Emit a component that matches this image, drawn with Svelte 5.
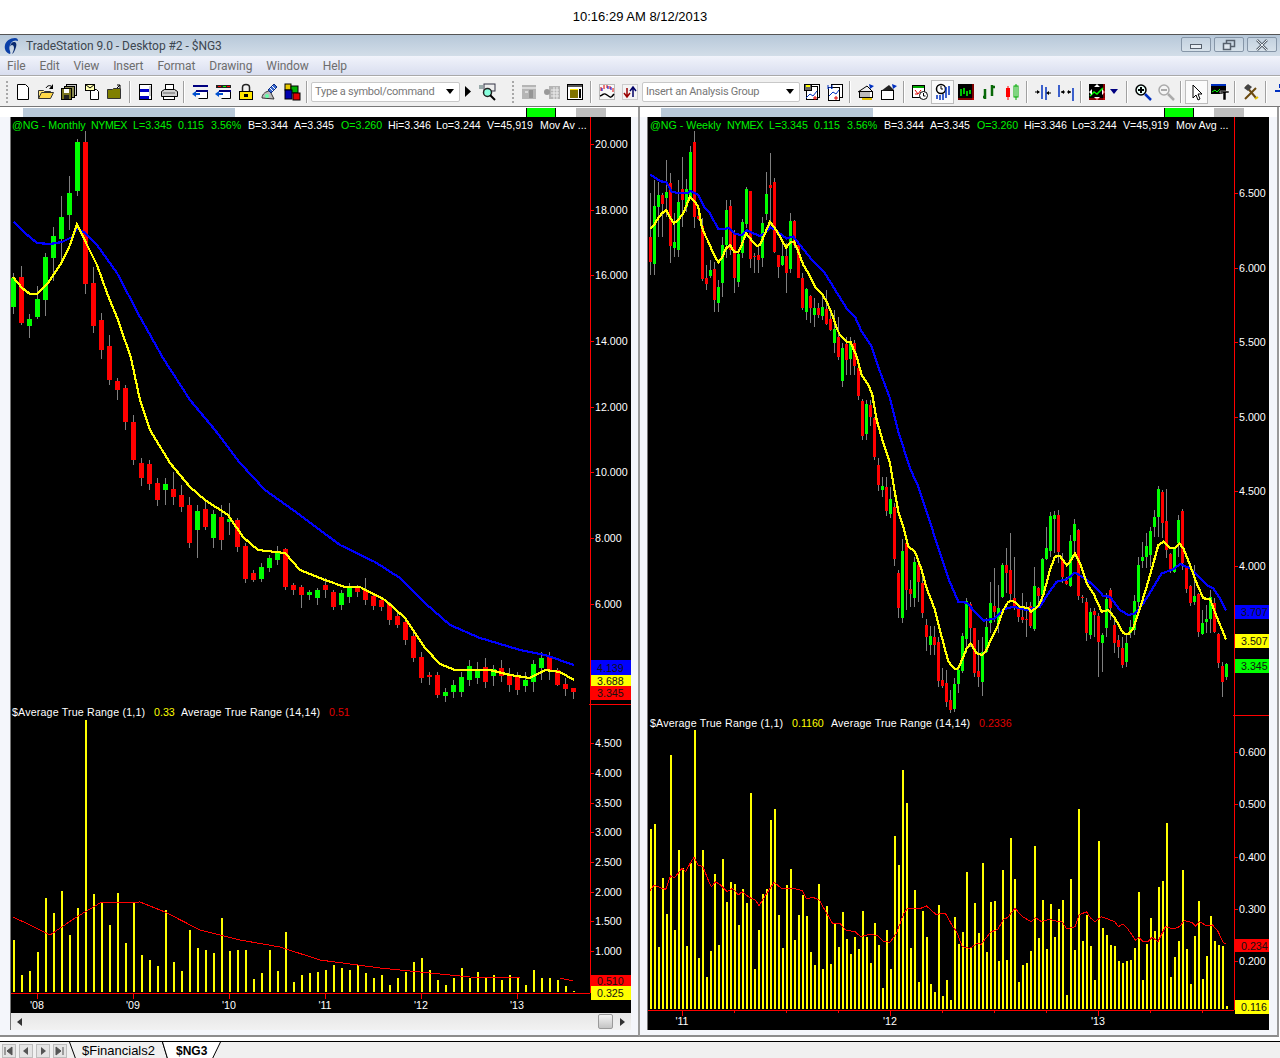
<script>
  // monthly candles, page y: [colour, wick top, body top, body bottom, wick bottom]
  const monthly = [
    ['g',273,278,307,314],['r',266,277,323,325],['g',314,319,326,338],['g',286,299,317,319],['g',253,257,300,316],
    ['g',227,236,258,281],['g',196,217,239,260],['g',176,193,215,230],['g',139,142,191,196],['r',131,142,284,294],
    ['r',267,283,326,333],['r',313,320,350,359],['r',335,346,380,385],['r',378,381,390,400],['r',385,388,422,430],
    ['r',415,422,460,465],['r',458,463,478,486],['r',460,464,484,490],['r',478,483,500,506],['g',478,484,490,505],
    ['r',472,489,497,505],['r',485,495,507,512],['r',497,505,543,548],['g',505,511,530,558],['r',500,509,527,530],
    ['g',510,514,538,548],['r',505,517,540,550],['g',503,519,522,535],['r',518,520,547,552],['r',543,546,579,583],
    ['r',570,573,580,582],['g',563,567,579,582],['g',555,558,568,572],['g',546,552,560,565],['r',548,549,587,590],
    ['r',583,585,590,595],['r',585,587,595,608],['g',590,592,595,600],['g',588,590,598,605],['r',578,585,590,598],
    ['r',590,592,607,610],['g',590,593,605,610],['g',583,586,597,603],['r',585,588,592,597],['r',578,590,600,605],
    ['r',595,596,606,610],['r',597,600,607,611],['r',602,604,620,625],['r',610,616,625,628],['r',618,622,640,645],
    ['r',630,636,658,662],['r',652,657,678,683],['r',672,675,677,685],['r',672,675,695,698],['g',688,692,696,702],
    ['g',680,685,692,698],['g',672,677,692,697],['g',660,666,680,686],['g',662,669,678,684],['r',658,667,682,688],
    ['g',665,669,676,686],['r',660,668,676,682],['r',668,674,685,692],['r',672,677,690,695],['g',672,680,686,692],
    ['g',660,664,682,692],['g',652,658,668,680],['r',652,656,670,680],['r',668,670,685,686],['r',678,684,689,696],
    ['r',688,688,692,699]
  ]
  const monthlyBars = [940,975,971,952,898,913,891,935,908,720,894,902,925,893,943,902,955,960,966,910,962,971,930,948,950,953,918,951,950,950,979,973,950,971,932,982,975,973,972,970,965,968,970,965,973,978,975,985,978,972,962,958,970,980,985,978,968,978,972,978,975,980,975,978,985,970,978,978,980,986,991]
  const monthlyYellow = [[13,277],[22,288],[30,294],[37,294],[48,283],[62,262],[70,245],[77,224],[87,245],[97,265],[107,293],[118,320],[131,358],[140,400],[150,430],[170,463],[190,487],[205,500],[228,515],[243,537],[258,550],[285,553],[300,570],[325,580],[345,587],[360,587],[385,600],[405,618],[425,648],[440,664],[455,670],[490,670],[510,675],[530,678],[545,670],[560,672],[574,680]]
  const monthlyBlue = [[14,222],[25,233],[37,243],[50,244],[62,242],[72,237],[77,228],[85,233],[97,245],[117,273],[140,317],[163,358],[190,400],[215,430],[240,463],[265,490],[300,515],[340,545],[375,562],[400,578],[425,603],[450,625],[480,638],[520,650],[545,655],[574,665]]
  const monthlyRed = [[13,917],[30,925],[50,935],[75,918],[100,903],[140,902],[165,912],[200,930],[240,940],[280,947],[320,960],[380,968],[420,972],[470,977],[520,978],[560,978],[573,981]]

  // weekly candles were read off two crops, so they stay in crop units and get scaled below
  const weeklyA = [
    ['r',190,320,397,435],['g',150,228,402,435],['g',155,195,232,320],['r',190,195,222,320],['g',90,185,204,260],
    ['r',130,160,348,398],['g',250,336,354,382],['g',150,216,360,380],['r',82,178,210,290],['g',148,178,232,245],
    ['g',48,66,200,205],['r',3,36,262,295],['r',255,258,268,270],['r',265,288,447,452],['r',405,444,462,480],
    ['g',390,420,438,445],['r',395,417,510,545],['g',450,471,519,545],['g',320,345,459,500],['g',210,240,345,385],
    ['r',210,228,360,375],['r',300,312,444,490],['g',370,372,456,470],['g',268,276,368,385],['g',170,177,282,295],
    ['r',183,183,387,415],['r',370,378,381,430],['r',350,375,390,430],['g',260,279,384,410],['g',125,192,252,270],
    ['r',68,165,174,285],['r',145,156,366,370],['r',375,375,411,445],['g',340,378,405,408],['r',340,378,429,490],
    ['g',248,273,417,430],['r',270,273,345,355],['r',340,345,444,445],['r',430,444,534,540],['g',475,477,546,570],
    ['r',495,498,534,580],['g',505,534,555,590],['r',520,534,555,565],['g',490,531,558,570],['r',480,537,582,585],
    ['r',540,567,600,602],['g',540,597,640,670],['r',560,620,680,690]
  ]
  const weeklyB = [
    ['g',130,145,243,260],['r',110,132,180,225],['g',110,130,177,225],['r',120,130,197,225],['r',195,203,288,300],
    ['r',298,303,407,420],['g',300,312,402,420],['r',300,316,350,378],['r',350,354,472,480],['r',475,495,555,572],
    ['g',530,558,570,590],['r',530,562,633,648],['g',560,597,642,655],['r',610,622,777,798],['r',810,820,923,955],
    ['g',718,753,953,970],['r',730,730,870,930],['r',840,868,882,920],['g',770,785,893,920],['r',780,795,847,905],
    ['r',820,850,938,955],['r',958,975,1012,1052],['g',978,1008,1035,1065],['r',978,1010,1035,1065],['r',1010,1025,1143,1160],
    ['r',1105,1140,1157,1165],['r',1110,1150,1205,1220],['r',1170,1200,1230,1240],['g',1135,1152,1227,1235],['g',1105,1110,1152,1180],
    ['g',1000,1008,1113,1120],['g',895,903,1017,1060],['r',905,912,985,1040],['r',985,985,1120,1130],['r',1020,1113,1130,1160],
    ['g',1010,1055,1145,1187],['g',955,982,1055,1060],['g',845,910,968,1000],['r',805,918,935,965],['g',855,925,968,1000],
    ['g',790,795,890,895],['r',745,795,820,880],['r',700,810,882,900],['r',770,895,925,930],['r',915,925,950,965],
    ['r',880,950,960,970],['r',905,958,960,1010],['r',905,918,977,985],['g',800,857,987,992],['r',860,865,888,915],
    ['g',775,777,885,905],['g',680,744,776,780],['g',635,648,752,770],['g',632,645,657,760],['r',630,645,757,790],
    ['r',760,778,832,850],['r',830,842,852,856],['g',705,724,857,860],['g',658,672,724,770],['r',688,690,888,900],
    ['r',885,891,893,910],['r',895,906,1000,1022],['g',925,935,1005,1018],['r',925,933,945,1010],['r',940,947,1025,1130],
    ['g',1000,1005,1030,1115],['g',880,896,985,1010],['r',865,870,925,960],['r',960,975,1030,1058],['r',1005,1020,1042,1075],
    ['r',1010,1045,1095,1105],['g',1005,1030,1087,1100],['g',960,982,1000,1015],['g',885,903,990,1005],['g',770,795,905,935],
    ['g',725,770,783,805],['g',700,738,770,805],['g',680,693,765,800],['g',630,652,682,710],['g',558,568,650,710],
    ['r',570,575,668,715],['r',568,664,750,775],['r',760,762,808,820],['g',740,748,815,820],['g',645,660,730,770],
    ['r',628,633,790,810],['r',800,805,866,880],['r',855,857,908,918],['g',795,888,905,915],['r',880,882,995,1010],
    ['g',930,968,1002,1005],['g',915,958,966,1000],['g',870,892,958,1000],['r',895,910,997,1000],['r',1000,1003,1090,1105],
    ['r',1085,1098,1145,1190],['g',1090,1092,1130,1140]
  ]
  const scaleCandle = (base) => ([c, ...ys]) => [c, ...ys.map((z) => base + z / 3)]
  const weekly = [...weeklyA.map(scaleCandle(130)), ...weeklyB.map(scaleCandle(300))]

  const weeklyBars = [312,297,665,459,567,90,615,375,429,663,414,15,699,375,756,678,447,660,402,531,471,477,600,492,534,204,732,615,507,492,285,252,570,669,480,432,645,570,510,573,681,720,477,732,543,717,594,666,561,642,687,636,672,558,636,714,594,660,789,615,732,333,420,135,234,669,495,771,558,636,777,801,540,813,765,825,576,657,621,441,669,534,624,414,681,531,528,708,435,705,339,462,771,720,714,678,363,639,525,672,537,636,552,525,810,462,675,252,648,570,663,765,348,609,630,660,663,708,714,708,705,669,501,765,657,579,618,486,468,294,756,696,648,435,672,777,633,528,762,693,573,648,660,663,843].map((z) => 725 + z / 3)

  const inCrop = (list, ox, oy, sx = 3) => list.map(([x, y]) => [ox + x / sx, oy + y / 3])
  const weeklyYellow = [
    ...inCrop([[0,297],[12,285],[24,265],[36,250],[48,240],[60,262],[72,280],[84,270],[100,250],[110,225],[120,200],[135,215],[145,232],[155,290],[165,315],[175,335],[190,370],[205,397],[215,385],[228,355],[240,345],[252,365],[265,367],[275,345],[288,310],[300,325],[320,348],[330,345],[345,310],[360,275],[375,295],[390,320],[408,353],[420,338],[432,335],[445,365],[460,405],[475,430],[495,470],[515,490],[530,515],[545,550],[560,595]], 650, 130),
    ...inCrop([[0,105],[20,125],[32,127],[50,170],[65,225],[85,255],[97,285],[110,360],[130,430],[150,490],[165,580],[175,635],[190,680],[205,740],[225,755],[245,810],[260,865],[285,930],[305,1010],[325,1085],[345,1107],[355,1105],[370,1070],[380,1045],[392,1030],[410,1060],[425,1065],[437,1055],[450,1025],[470,985],[490,930],[505,905],[520,903],[540,920],[565,925],[573,935],[595,918],[610,885],[630,810],[645,770],[660,768],[680,795],[690,785],[705,760],[720,790],[740,850],[760,880],[785,935],[805,930],[825,955],[850,1000],[865,1003],[880,985],[900,925],[920,860],[940,790],[955,735],[970,725],[990,745],[1005,745],[1018,730],[1030,745],[1050,795],[1070,850],[1090,895],[1110,897],[1130,950],[1158,1018]], 840, 300)
  ]
  const weeklyBlue = [
    ...inCrop([[0,133],[15,143],[30,153],[50,158],[65,185],[90,190],[110,190],[122,183],[145,195],[165,235],[180,250],[205,298],[220,298],[237,293],[255,312],[275,315],[290,300],[310,310],[330,318],[345,310],[360,292],[375,298],[395,315],[410,325],[430,320],[450,345],[490,395],[525,430],[565,495]], 650, 130),
    ...inCrop([[20,25],[45,50],[65,95],[95,140],[120,215],[150,295],[175,395],[210,505],[235,560],[265,650],[295,745],[325,835],[355,905],[380,908],[400,930],[430,962],[465,955],[490,928],[520,920],[560,930],[600,920],[625,880],[650,845],[680,838],[705,818],[735,835],[765,860],[790,888],[810,890],[840,930],[865,945],[885,940],[910,910],[935,870],[965,820],[1000,808],[1020,792],[1050,805],[1075,830],[1105,858],[1120,865],[1140,895],[1158,932]], 840, 300)
  ]
  const weeklyRed = inCrop([[5,497],[16,480],[37,490],[47,493],[60,453],[70,458],[80,445],[90,430],[100,440],[112,415],[122,397],[133,420],[146,425],[158,460],[168,485],[180,470],[195,482],[210,500],[225,490],[240,510],[250,500],[270,518],[285,525],[295,542],[310,515],[335,472],[355,490],[385,490],[410,497],[420,520],[440,518],[455,525],[475,565],[490,595],[510,595],[525,615],[550,620],[565,635],[590,628],[610,632],[625,648],[643,652],[660,625],[680,565],[690,550],[720,552],[740,543],[765,568],[790,565],[810,605],[820,620],[835,665],[855,670],[875,655],[885,658],[910,622],[930,612],[945,582],[955,578],[975,550],[995,575],[1018,590],[1030,578],[1045,590],[1065,583],[1085,588],[1100,590],[1113,612],[1135,605],[1145,570],[1165,560],[1175,578],[1188,590],[1205,575],[1240,590],[1250,605],[1262,597],[1275,612],[1295,645],[1305,637],[1315,650],[1330,648],[1340,637],[1355,650],[1375,605],[1395,612],[1412,605],[1425,587],[1445,592],[1455,603],[1465,590],[1485,603],[1500,600],[1515,620],[1528,652],[1535,657]], 648, 725, 2.657)

  const points = (list) => list.map((p) => p.join(',')).join(' ')

  const charts = [
    {
      key: 'monthly', left: 11, view: '11 117 620 896', w: 620, h: 896,
      candles: monthly, x0: 13, step: 8, body: 5, bodyOff: 2,
      bars: monthlyBars, base: 992, axis: 590, right: 631, split: 704, bottom: 993,
      yellow: monthlyYellow, blue: monthlyBlue, red: monthlyRed,
      head: [['@NG - Monthly',12,'g'],['NYMEX',91,'g tight'],['L=3.345',133,'g'],['0.115',178,'g'],['3.56%',211,'g'],['B=3.344',248,'w'],['A=3.345',294,'w'],['O=3.260',341,'g'],['Hi=3.346',388,'w'],['Lo=3.244',436,'w'],['V=45,919',487,'w'],['Mov Av ...',540,'w']],
      headY: 129,
      atr: [['$Average True Range (1,1)',12,'w wide'],['0.33',154,'y'],['Average True Range (14,14)',181,'w wide'],['0.51',329,'r']],
      atrY: 716,
      ticks: [['20.000',144],['18.000',210],['16.000',275],['14.000',341],['12.000',407],['10.000',472],['8.000',538],['6.000',604],['4.500',743],['4.000',773],['3.500',803],['3.000',832],['2.500',862],['2.000',892],['1.500',921],['1.000',951]],
      boxes: [['4.139',660,15,'b'],['3.688',675,11,'y'],['3.345',686,14,'r'],['0.510',975,11,'r'],['0.325',986,14,'y']],
      boxX: 591, boxW: 40, labelX: 595,
      years: [["'08",37],["'09",133],["'10",229],["'11",325],["'12",421],["'13",517]],
      minors: [], yearY: 1005
    },
    {
      key: 'weekly', left: 648, view: '648 117 621 913', w: 621, h: 913,
      candles: weekly, x0: 650, step: 4, body: 3, bodyOff: 1,
      bars: weeklyBars, base: 1009, axis: 1234, right: 1269, split: 715, bottom: 1010,
      yellow: weeklyYellow, blue: weeklyBlue, red: weeklyRed,
      head: [['@NG - Weekly',650,'g'],['NYMEX',727,'g tight'],['L=3.345',769,'g'],['0.115',814,'g'],['3.56%',847,'g'],['B=3.344',884,'w'],['A=3.345',930,'w'],['O=3.260',977,'g'],['Hi=3.346',1024,'w'],['Lo=3.244',1072,'w'],['V=45,919',1123,'w'],['Mov Avg ...',1176,'w']],
      headY: 129,
      atr: [['$Average True Range (1,1)',650,'w wide'],['0.1160',792,'y'],['Average True Range (14,14)',831,'w wide'],['0.2336',979,'r']],
      atrY: 727,
      ticks: [['6.500',193],['6.000',268],['5.500',342],['5.000',417],['4.500',491],['4.000',566],['0.600',752],['0.500',804],['0.400',857],['0.300',909],['0.200',961]],
      boxes: [['3.707',605,14,'b'],['3.507',634,14,'y'],['3.345',659,14,'g'],['0.234',939,13,'r'],['0.116',1000,14,'y']],
      boxX: 1235, boxW: 34, labelX: 1239,
      years: [["'11",682],["'12",890],["'13",1098]],
      minors: [734,786,838,942,994,1046,1150,1202], yearY: 1021
    }
  ]

  const icons = {
    new: '<path d="M3.5 1.5h8l3 3v12h-11z" fill="#fff" stroke="#000"/>',
    open: '<path d="M1.5 15.5v-8h5l1 1h6v2" fill="#ffe680" stroke="#333"/><path d="M1.5 15.5l3-6h12l-3 6z" fill="#ffd84a" stroke="#333"/><path d="M9 5c1-2 3-3 5-2" fill="none" stroke="#000"/><path d="M16 1v5h-4z" fill="#000"/>',
    saveall: '<rect x="6.5" y="1.5" width="10" height="11" fill="#c9c9c9" stroke="#000"/><rect x="4.5" y="3.5" width="10" height="11" fill="#8a8a50" stroke="#000"/><rect x="1.5" y="5.5" width="10" height="11" fill="#7a7520" stroke="#000"/><rect x="4" y="6" width="5" height="4" fill="#fff"/><rect x="4" y="12" width="5" height="4" fill="#222"/>',
    mailpage: '<path d="M7.5 6.5h6l2 2v8h-8z" fill="#fff" stroke="#000"/><rect x="2.5" y="1.5" width="9" height="6" fill="#ffffb0" stroke="#000"/><path d="M2.5 1.5l4.5 3.5 4.500-3.500" fill="none" stroke="#000"/>',
    folder: '<path d="M1.500 15.500v-9h5l1-1h7v10z" fill="#808000" stroke="#333"/><path d="M11 5l3-3M14 2h-3M14 2v3" fill="none" stroke="#000"/>',
    layout: '<rect x="2.500" y="1.500" width="12" height="15" fill="#fff" stroke="#000"/><rect x="3" y="6" width="9" height="3" fill="#0000c8"/><rect x="3" y="13" width="9" height="3" fill="#0000c8"/><rect x="12" y="3" width="2" height="10" fill="#ccc"/>',
    printer: '<rect x="5.500" y="1.500" width="8" height="6" fill="#fff" stroke="#000"/><path d="M1.500 8.500l3-2h10l3 2v5h-16z" fill="#cfcfcf" stroke="#000"/><rect x="3.500" y="13.500" width="11" height="3" fill="#fff" stroke="#000"/><path d="M3 10h12" stroke="#666"/>',
    winback: '<rect x="2" y="2" width="15" height="2" fill="#000080"/><path d="M5.500 7.500h11v8h-9" fill="#fff" stroke="#000"/><rect x="5" y="7" width="12" height="2" fill="#000080"/><path d="M1 11l4-3v6z" fill="#0050d0"/><path d="M4 11h5" stroke="#0050d0" stroke-width="2"/>',
    winback2: '<rect x="2" y="2" width="15" height="3" fill="#222"/><rect x="4" y="3" width="3" height="1" fill="#f00"/><rect x="9" y="3" width="3" height="1" fill="#0f0"/><rect x="13" y="3" width="3" height="1" fill="#f00"/><path d="M5.500 7.500h11v8h-9" fill="#fff" stroke="#000"/><rect x="5" y="7" width="12" height="2" fill="#000080"/><path d="M1 11l4-3v6z" fill="#0050d0"/><path d="M4 11h5" stroke="#0050d0" stroke-width="2"/>',
    lock: '<path d="M5.500 8.500v-4c0-4 7-4 7 0v4" fill="none" stroke="#222" stroke-width="1.500"/><rect x="2.500" y="8.500" width="13" height="8" fill="#ffe600" stroke="#000"/><rect x="7" y="11" width="4" height="3" fill="#000"/>',
    sat: '<path d="M2 15c0-4 4-7 8-7l4 8z" fill="#bbb" stroke="#333"/><path d="M8 7l6-6 3 3-6 6z" fill="#3a6ad0" stroke="#0a2a80"/><path d="M10 5l3 3M12 3l3 3" stroke="#fff"/><circle cx="7" cy="13" r="2" fill="#6fa"/>',
    cubes: '<rect x="2" y="1" width="6" height="6" fill="#e8c800" stroke="#000"/><rect x="8" y="3" width="7" height="7" fill="#00b000" stroke="#000"/><rect x="2" y="7" width="7" height="9" fill="#0000b0" stroke="#000"/><rect x="10" y="10" width="7" height="7" fill="#e00000" stroke="#000"/>',
    zoomchart: '<rect x="1" y="2" width="4" height="4" fill="#9aa"/><rect x="6" y="1" width="11" height="7" fill="#eee" stroke="#334"/><circle cx="9.500" cy="9.500" r="4" fill="#8fd" stroke="#222" stroke-width="1.500"/><path d="M12 12l5 5" stroke="#000" stroke-width="2"/>',
    grey1: '<rect x="2" y="2" width="14" height="14" fill="#b5b5b5"/><path d="M2 5h14" stroke="#fff"/><path d="M10 7v8M12 7v8" stroke="#777"/><path d="M5 9h3" stroke="#fff"/>',
    grey2: '<rect x="6" y="3" width="11" height="13" fill="#b5b5b5"/><circle cx="4" cy="9" r="3" fill="#999"/><path d="M8 7h8M8 10h8M8 13h8M11 4v12M14 4v12" stroke="#eee"/>',
    sheet: '<rect x="1.500" y="1.500" width="15" height="15" fill="#fff" stroke="#000"/><rect x="2" y="2" width="14" height="2" fill="#555"/><rect x="4" y="6" width="8" height="9" fill="#ffe600"/><path d="M4 8h8M4 10h8M4 12h8M4 14h8" stroke="#000"/><path d="M14 6v9" stroke="#000" stroke-width="2"/>',
    curve: '<rect x="1.500" y="1.500" width="15" height="15" fill="#f8f8f8" stroke="#bbb"/><path d="M3 4v4M6 2v4M9 2v3M12 3v3M15 5v4" stroke="#d00"/><path d="M4 5v3M10 3v3M13 4v3" stroke="#00c"/><path d="M2 13c4-1 3-4 7-1s4 3 7-1" fill="none" stroke="#000" stroke-width="1.500"/>',
    updown: '<rect x="1.500" y="1.500" width="15" height="15" fill="#f4f4f4" stroke="#ccc"/><path d="M6 5v9M3 10l3 4 3-4" fill="none" stroke="#900" stroke-width="1.500"/><path d="M12 14V4M9 8l3-4 3 4" fill="none" stroke="#006" stroke-width="1.500"/>',
    chartsave: '<rect x="5.500" y="1.500" width="11" height="13" fill="#fff" stroke="#000"/><rect x="3.500" y="3.500" width="11" height="13" fill="#fff" stroke="#000"/><rect x="1.500" y="1.500" width="7" height="6" fill="#666" stroke="#000"/><rect x="3" y="2" width="4" height="2" fill="#ff0"/><path d="M3 15l4-4 3 2 4-5" fill="none" stroke="#0030c0"/><path d="M10 15h4M12 13v4" stroke="#d00"/>',
    chartm: '<rect x="5.500" y="1.500" width="11" height="13" fill="#fff" stroke="#000"/><rect x="2.500" y="4.500" width="11" height="13" fill="#fff" stroke="#000"/><path d="M2 2v4l2-2 2 2V2" fill="none" stroke="#0030c0"/><path d="M3 13l4-4 3 2 3-4" fill="none" stroke="#0030c0"/><path d="M8 15h4M10 13v4" stroke="#d00"/>',
    grid1: '<path d="M1 9l9-6 6 6" fill="#eee" stroke="#000"/><rect x="2.500" y="8.500" width="13" height="6" fill="#fff" stroke="#000"/><path d="M4 9v5M6 9v5M8 9v5M10 9v5M12 9v5" stroke="#777"/><path d="M5 16h10" stroke="#e0c000" stroke-width="2"/><path d="M12 1l5 2-4 3z" fill="#0030c0"/>',
    grid2: '<rect x="1.500" y="7.500" width="12" height="9" fill="#fff" stroke="#000"/><path d="M1 8l8-6 5 5z" fill="#222"/><path d="M12 1l5 2-4 3z" fill="#0030c0"/>',
    calendar: '<rect x="1.500" y="2.500" width="12" height="12" fill="#fff" stroke="#000"/><rect x="2" y="3" width="11" height="2" fill="#0a0"/><path d="M4 7l3 4 3-4M4 11h3" fill="none" stroke="#d00"/><circle cx="12.500" cy="12.500" r="4" fill="#fff" stroke="#000"/><path d="M12.500 10v3h2" fill="none" stroke="#000"/>',
    clockbars: '<circle cx="7" cy="6" r="4.500" fill="#fff" stroke="#000" stroke-width="1.500"/><path d="M7 3v3h2" fill="none" stroke="#000"/><path d="M3 12v4M6 12v5M9 11v6M12 4v11M15 3v9" stroke="#0030c0" stroke-width="1.500"/>',
    blackbars: '<rect x="1" y="1" width="16" height="16" fill="#000"/><path d="M4 6v7M7 5v6M10 8v5M13 7v4" stroke="#0f0" stroke-width="1.500"/><path d="M1 16h16M16 1v16" stroke="#f00"/>',
    greenbars: '<path d="M5 6v10M3 14h2M12 2v11M12 4h3" fill="none" stroke="#086808" stroke-width="2.500"/>',
    candles: '<rect x="3" y="5" width="4" height="9" fill="#f00"/><path d="M5 3v14" stroke="#f00"/><rect x="11" y="3" width="4" height="11" fill="#fff" stroke="#0a0"/><path d="M13 1v16" stroke="#0a0"/>',
    squeeze: '<path d="M8 2v14M12 4v13" stroke="#0030c0" stroke-width="1.500"/><path d="M1 9h4M17 10h-3" stroke="#000"/><path d="M6 9l-3-2v4zM12 10l3-2v4z" fill="#000"/>',
    stretch: '<path d="M2 2v12M16 5v13" stroke="#0030c0" stroke-width="1.500"/><path d="M4 9h4M14 9h-4" stroke="#000"/><path d="M4 9l3-2v4zM14 9l-3-2v4z" fill="#000"/>',
    fit: '<rect x="1" y="1" width="16" height="16" fill="#000"/><path d="M2 13l4-4 3 2 6-6" fill="none" stroke="#0f0" stroke-width="1.500"/><path d="M9 1l3 3H6zM9 17l3-3H6zM1 9l3-3v6zM17 9l-3-3v6z" fill="#fff"/><path d="M1 16h16M16 1v16" stroke="#f00"/>',
    zoomin: '<circle cx="7" cy="7" r="5" fill="#e8fff8" stroke="#000" stroke-width="1.500"/><path d="M4 7h6M7 4v6" stroke="#000" stroke-width="2"/><path d="M11 11l6 6" stroke="#0030c0" stroke-width="2.500"/>',
    zoomout: '<circle cx="7" cy="7" r="5" fill="#f4f4f4" stroke="#aaa" stroke-width="1.500"/><path d="M4 7h6" stroke="#aaa" stroke-width="2"/><path d="M11 11l6 6" stroke="#aaa" stroke-width="2.500"/>',
    cursor: '<path d="M5 2v13l3-3 2 5 2-1-2-5h4z" fill="#fff" stroke="#000"/>',
    texttool: '<rect x="0" y="1" width="15" height="10" fill="#000"/><rect x="0" y="1" width="15" height="2" fill="#0030c0"/><path d="M1 9l3-2 2 2 3-3" fill="none" stroke="#0f0"/><path d="M9 8h9v2h-3v7h-3v-7H9z" fill="#000" stroke="#fff" stroke-width=".5"/>',
    hammer: '<path d="M3 16L14 5M4 3l10 12" stroke="#6b4a10" stroke-width="2"/><path d="M2 5l4-4 4 3-4 4z" fill="#444"/><path d="M13 16l3-2" stroke="#e0c000" stroke-width="2"/>',
    more: '<rect x="6" y="1" width="4" height="4" fill="#0030c0"/><path d="M2 8h12" stroke="#0030c0" stroke-width="2"/><rect x="8" y="11" width="8" height="6" fill="#fff" stroke="#000"/>'
  }

  // '|' separator, '::' grip, {gap} spacer, {combo} dropdown, {narrow} small glyph, {on} pressed button
  const tools = [
    '::','new','open','saveall','mailpage','folder','|','layout','printer','|','winback','winback2','lock','sat','cubes','|',
    { combo: 'Type a symbol/command', w: 149 }, { narrow: 'play', w: 15 }, 'zoomchart', { gap: 11 }, '::',
    'grey1','grey2','sheet',{ gap: 1 },'|','curve','updown',{ gap: 1 },{ combo: 'Insert an Analysis Group', w: 158 },'chartsave','chartm','|','grid1','grid2','|',
    'calendar',{ on: 'clockbars' },'blackbars','greenbars','candles','|','squeeze','stretch','|','fit',{ narrow: 'drop', w: 12 },{ gap: 3 },'|',
    'zoomin','zoomout','|',{ on: 'cursor' },'texttool','|','hammer','|','more'
  ]

  const menu = ['File', 'Edit', 'View', 'Insert', 'Format', 'Drawing', 'Window', 'Help']
</script>

<div class="clock">10:16:29 AM 8/12/2013</div>

<header class="titlebar">
  <svg class="logo" width="14" height="18" viewBox="0 0 14 18">
    <path d="M6 17C2 16 0 12 1 8S6 1 11 1c2 0 3 1 3 3-2-1-5-1-7 2s-2 6-1 8c0 1 1 2 0 3z" fill="#0a3fa8" />
    <path d="M6 10c0-3 2-5 4-5s3 2 2 5-2 6-4 7c1-2 2-4 2-6s-1-3-2-3-2 1-2 2z" fill="#0a2a70" />
  </svg>
  <span class="title">TradeStation 9.0 - Desktop #2 - $NG3</span>
  <div class="winbtns">
    <button aria-label="Minimize"><svg width="14" height="10" viewBox="0 0 14 10"><rect x="1.500" y="4.500" width="11" height="4" fill="#e8eef4" stroke="#56606c" /></svg></button>
    <button aria-label="Restore"><svg width="14" height="12" viewBox="0 0 14 12"><rect x="4.500" y="1.500" width="8" height="6" fill="none" stroke="#56606c" stroke-width="1.500" /><rect x="1.500" y="4.500" width="7" height="6" fill="#dfe7ef" stroke="#56606c" stroke-width="1.500" /></svg></button>
    <button aria-label="Close"><svg width="14" height="12" viewBox="0 0 14 12"><path d="M2 1l10 10M12 1L2 11" stroke="#5d6772" stroke-width="2.500" /><path d="M2 1l10 10M12 1L2 11" stroke="#e8eef4" stroke-width="1" /></svg></button>
  </div>
</header>

<nav class="menubar">
  {#each menu as item}
    <span>{item}</span>
  {/each}
</nav>

<div class="toolbar">
  {#each tools as tool}
    {#if tool === '|'}
      <i class="sep"></i>
    {:else if tool === '::'}
      <i class="grip"></i>
    {:else if tool.gap}
      <i style="width: {tool.gap}px"></i>
    {:else if tool.combo}
      <div class="combo" style="width: {tool.w}px">
        <span>{tool.combo}</span>
        <svg width="8" height="5" viewBox="0 0 8 5"><path d="M0 0h8L4 5z" fill="#000" /></svg>
      </div>
    {:else if tool.narrow}
      <div class="narrow" style="width: {tool.w}px">
        {#if tool.narrow === 'play'}
          <svg width="6" height="11" viewBox="0 0 6 11"><path d="M0 0l6 5.500L0 11z" fill="#000" /></svg>
        {:else}
          <svg width="8" height="5" viewBox="0 0 8 5"><path d="M0 0h8L4 5z" fill="#000080" /></svg>
        {/if}
      </div>
    {:else}
      <div class="tool" class:on={tool.on}>
        <svg width="18" height="18" viewBox="0 0 18 18">{@html icons[tool.on || tool]}</svg>
      </div>
    {/if}
  {/each}
</div>

<main class="workspace">
  {#each charts as chart, n}
    <section class="window" class:first={n === 0}>
      <div class="caption">
        <i class="strip"></i>
        <i class="live"></i>
        <i class="idle"></i>
      </div>
      <div class="pane">
        <svg class="plot" viewBox={chart.view} width={chart.w} height={chart.h} shape-rendering="crispEdges">
          {#each chart.head as [text, x, c]}
            <text {x} y={chart.headY} class="t {c}">{text}</text>
          {/each}

          {#each chart.candles as [c, wt, bt, bb, wb], i}
            {@const x = chart.x0 + i * chart.step}
            <rect {x} y={wt} width="1" height={wb - wt} class="wick" />
            <rect x={x - chart.bodyOff} y={bt} width={chart.body} height={Math.max(bb - bt, 1)} class={c === 'g' ? 'fg' : 'fr'} />
          {/each}
          <polyline points={points(chart.blue)} class="ma blue" />
          <polyline points={points(chart.yellow)} class="ma yellow" />

          {#each chart.atr as [text, x, c]}
            <text {x} y={chart.atrY} class="t {c}">{text}</text>
          {/each}
          {#each chart.bars as top, i}
            <rect x={chart.x0 + i * chart.step} y={top} width="2" height={chart.base - top} class="fy" />
          {/each}
          <polyline points={points(chart.red)} class="atr" />

          <rect x={chart.axis} y="117" width="1" height={chart.bottom - 117} class="fr" />
          <rect x={chart.axis - 1} y={chart.split} width={chart.right - chart.axis + 1} height="1" class="fr" />
          <rect x={chart.left} y={chart.bottom} width={chart.axis - chart.left} height="1" class="fr" />

          {#each chart.ticks as [text, y]}
            <rect x={chart.axis} {y} width="4" height="1" class="fr" />
            <text x={chart.labelX} y={y + 4} class="t w">{text}</text>
          {/each}
          {#each chart.boxes as [text, y, h, c]}
            <rect x={chart.boxX} {y} width={chart.boxW} height={h} class={{ b: 'fb', y: 'fy', r: 'fr', g: 'fg' }[c]} />
            <text x={chart.labelX + 2} y={y + h / 2 + 4} class="t k">{text}</text>
          {/each}

          {#each chart.years as [text, x]}
            <rect {x} y={chart.bottom} width="1" height="6" class="fr" />
            <text {x} y={chart.yearY + 4} class="t w mid">{text}</text>
          {/each}
          {#each chart.minors as x}
            <rect {x} y={chart.bottom} width="1" height="3" class="fr" />
          {/each}
        </svg>
        {#if n === 0}
          <div class="scroll">
            <svg width="5" height="8" viewBox="0 0 5 8"><path d="M5 0v8L0 4z" fill="#333" /></svg>
            <span class="thumb"></span>
            <svg width="5" height="8" viewBox="0 0 5 8"><path d="M0 0v8l5-4z" fill="#333" /></svg>
          </div>
        {/if}
      </div>
    </section>
  {/each}
</main>

<footer class="tabs">
  <svg width="1280" height="17" viewBox="0 0 1280 17">
    {#each [2, 19, 36, 53] as x, i}
      <rect x={x + 0.5} y="2.500" width="13" height="13" fill="#e4e4e4" stroke="#bdbdbd" />
      {#if i === 0}
        <path d="M{x + 3} 5v8M{x + 10} 5v8l-5-4z" fill="#555" stroke="#555" />
      {:else if i === 1}
        <path d="M{x + 9} 5v8l-5-4z" fill="#555" />
      {:else if i === 2}
        <path d="M{x + 5} 5v8l5-4z" fill="#555" />
      {:else}
        <path d="M{x + 10} 5v8M{x + 3} 5v8l5-4z" fill="#555" stroke="#555" />
      {/if}
    {/each}
    <path d="M69.500 0l6 16.500h92l-5-16.500" fill="#f0f0f0" stroke="#000" />
    <path d="M162.500 0l5 16.500h45l8-16.500" fill="#fff" stroke="#000" />
    <text x="82" y="13" class="tab">$Financials2</text>
    <text x="176" y="13" class="tab bold">$NG3</text>
  </svg>
</footer>

<style>
  :global(body) {
    background: #fff;
    overflow: hidden;
  }

  i {
    display: block;
    flex: none;
  }

  .clock {
    height: 34px;
    text-align: center;
    font: 13px/34px "Liberation Sans", sans-serif;
    color: #000;
  }

  .titlebar {
    height: 21px;
    border-top: 1px solid #555;
    background: linear-gradient(#b7c8d9, #d2dde8);
    display: flex;
    align-items: center;
    padding-left: 4px;
  }

  .logo {
    flex: none;
  }

  .title {
    margin-left: 8px;
    font: 12px Roboto, sans-serif;
    letter-spacing: -0.05px;
    color: #3c4650;
  }

  .winbtns {
    margin-left: auto;
    margin-right: 3px;
    align-self: flex-start;
    margin-top: 2px;
    display: flex;
    gap: 3px;
  }

  .winbtns button {
    width: 30px;
    height: 15px;
    padding: 0;
    display: flex;
    align-items: center;
    justify-content: center;
    border: 1px solid #8696a8;
    border-radius: 2px;
    background: linear-gradient(#c3d1df, #d6e1ea);
  }

  .menubar {
    height: 20px;
    box-sizing: border-box;
    border-bottom: 1px solid #a9a9a9;
    background: linear-gradient(#f1f3fb, #d9deef);
    display: flex;
    align-items: center;
    gap: 14px;
    padding-left: 7px;
    font: 12px Roboto, sans-serif;
    letter-spacing: -0.08px;
    color: #6d6d6d;
  }

  .toolbar {
    height: 30px;
    box-sizing: border-box;
    border-top: 1px solid #fff;
    padding-left: 3px;
    background: #f0f0f0;
    display: flex;
    align-items: center;
    overflow: hidden;
  }

  .tool {
    flex: none;
    width: 23px;
    height: 24px;
    box-sizing: border-box;
    display: flex;
    align-items: center;
    justify-content: center;
  }

  .tool.on {
    background: #fbfbfb;
    border: 1px solid #bdbdbd;
  }

  .narrow {
    flex: none;
    display: flex;
    align-items: center;
    justify-content: center;
  }

  .sep {
    width: 2px;
    height: 22px;
    margin: 0 3px;
    background: linear-gradient(90deg, #a0a0a0 50%, #fff 50%);
  }

  .grip {
    width: 2px;
    height: 22px;
    margin: 0 3px;
    background: repeating-linear-gradient(#a8a8a8 0 2px, transparent 2px 4px);
  }

  .combo {
    flex: none;
    height: 20px;
    box-sizing: border-box;
    border: 1px solid #c8c8c8;
    border-radius: 2px;
    background: #fff;
    display: flex;
    align-items: center;
    justify-content: space-between;
    padding: 0 5px 0 3px;
    font: 11px Roboto, sans-serif;
    letter-spacing: -0.25px;
    white-space: nowrap;
    color: #777;
  }

  .workspace {
    height: 934px;
    border-top: 1px solid #777;
    display: flex;
    background: #fff;
  }

  .window {
    flex: 0 0 639px;
    box-sizing: border-box;
    height: 930px;
    background: #f4f6fb;
    border-right: 2px solid #999;
    border-bottom: 2px solid #8c8c8c;
    padding: 0 8px 0 7px;
  }

  .window.first {
    flex-basis: 640px;
    padding: 0 7px 0 10px;
  }

  .caption {
    height: 10px;
    margin: 0 -8px 0 -7px;
    padding-left: 21px;
    padding-top: 1px;
    box-sizing: border-box;
    background: #fff;
    display: flex;
  }

  .first .caption {
    margin: 0 -7px 0 -10px;
    padding-left: 23px;
  }

  .strip {
    width: 212px;
    background: #b9c9d9;
  }

  .live {
    width: 30px;
    margin-left: 291px;
    box-sizing: border-box;
    background: #00ff00;
    border: solid #000;
    border-width: 0 1px;
  }

  .idle {
    width: 30px;
    margin-left: 20px;
    background: #bfbfbf;
  }

  .pane {
    border-left: 1px solid #777;
    background: #000;
  }

  .plot {
    display: block;
    background: #000;
  }

  .scroll {
    height: 17px;
    background: linear-gradient(#e6e6e6, #f2f2f2);
    display: flex;
    align-items: center;
    padding: 0 6px;
  }

  .thumb {
    margin-left: auto;
    margin-right: 7px;
    width: 15px;
    height: 15px;
    box-sizing: border-box;
    border: 1px solid #9a9a9a;
    border-radius: 2px;
    background: linear-gradient(#f4f4f4, #c4c4c4);
  }

  .tabs {
    height: 17px;
    border-top: 1px solid #000;
    background: #f0f0f0;
  }

  .tabs svg {
    display: block;
  }

  .tab {
    font: 13px "Liberation Sans", sans-serif;
    fill: #000;
  }

  .tab.bold {
    font: bold 12px "Liberation Sans", sans-serif;
  }

  .t {
    font: 10.67px "Liberation Sans", sans-serif;
    white-space: pre;
  }

  .tight {
    letter-spacing: -0.4px;
  }

  .wide {
    letter-spacing: 0.17px;
  }

  .mid {
    text-anchor: middle;
  }

  .t.g { fill: #00f000; }
  .t.w { fill: #fff; }
  .t.y { fill: #ffff00; }
  .t.r { fill: #e00000; }
  .t.k { fill: #111; }

  .wick { fill: #808080; }
  .fg { fill: #00ff00; }
  .fr { fill: #ff0000; }
  .fy { fill: #ffff00; }
  .fb { fill: #0000ff; }

  .ma {
    fill: none;
    stroke-width: 2.2;
  }

  .blue { stroke: #0000ff; }
  .yellow { stroke: #ffff00; }

  .atr {
    fill: none;
    stroke: #ff0000;
    stroke-width: 1;
  }
</style>
